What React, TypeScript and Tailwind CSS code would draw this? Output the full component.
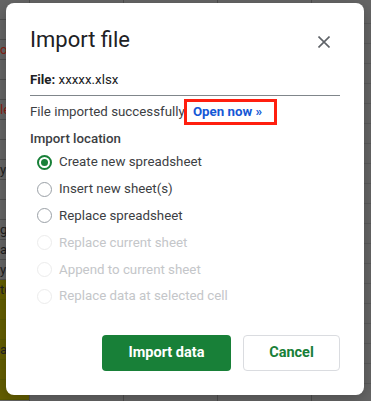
const options = [
  { label: "Create new spreadsheet", checked: true, disabled: false },
  { label: "Insert new sheet(s)", checked: false, disabled: false },
  { label: "Replace spreadsheet", checked: false, disabled: false },
  { label: "Replace current sheet", checked: false, disabled: true },
  { label: "Append to current sheet", checked: false, disabled: true },
  { label: "Replace data at selected cell", checked: false, disabled: true },
];

// fragments of the sheet that peek out on the left side of the dialog
const leftCells = ["", "", "ol", "", "", "le", "", "", "y", "", "", "go", "ar", "y", "t(", "", "", "ar", "", ""];

function Radio({ checked, disabled }: { checked: boolean; disabled: boolean }) {
  if (checked) {
    return (
      <span className="flex h-[15px] w-[15px] items-center justify-center rounded-full border-2 border-[#188038]">
        <span className="h-[7px] w-[7px] rounded-full bg-[#188038]" />
      </span>
    );
  }
  return (
    <span
      className={
        disabled
          ? "h-[15px] w-[15px] rounded-full border-[1.5px] border-[#ececec]"
          : "h-[15px] w-[15px] rounded-full border-[1.5px] border-[#9aa0a6]"
      }
    />
  );
}

function SheetBackground() {
  return (
    <div className="flex h-[401px] w-[371px] overflow-hidden bg-[#666666]">
      <div className="flex w-[30px] shrink-0 flex-col border-r border-[#4f4f4f]">
        {leftCells.map((t, i) => (
          <div
            key={i}
            className={
              i >= 14
                ? "h-[20px] shrink-0 overflow-hidden border-b border-[#5a5a00] bg-[#655f00] text-[13px] leading-[20px] text-[#222]"
                : "h-[20px] shrink-0 overflow-hidden border-b border-[#4f4f4f] text-[13px] leading-[20px] " +
                  (i < 8 ? "text-[#8a1f14]" : "text-[#1e1e1e]")
            }
          >
            {t}
          </div>
        ))}
      </div>
      {[0, 1, 2, 3].map((c) => (
        <div key={c} className="flex w-[94px] shrink-0 flex-col border-r border-[#4f4f4f] pt-[4px]">
          {Array.from({ length: 20 }).map((_, r) => (
            <div key={r} className="h-[20px] shrink-0 border-b border-[#5b5b5b]" />
          ))}
        </div>
      ))}
    </div>
  );
}

export default function App() {
  return (
    <div className="relative h-[401px] w-[371px] overflow-hidden font-['Roboto','Liberation_Sans',sans-serif]">
      <SheetBackground />

      <div className="absolute left-[6px] top-[3px] flex h-[392px] w-[358px] flex-col rounded-[8px] bg-white px-[24px] pt-[23px] shadow-[0_4px_16px_rgba(0,0,0,0.25)]">
        <div className="flex items-start justify-between">
          <h1 className="text-[22px] leading-[28px] text-[#202124]">Import file</h1>
          <button className="mr-[10px] mt-[10px] text-[#5f6368]">
            <svg width="12" height="12" viewBox="0 0 12 12" fill="none" stroke="currentColor" strokeWidth="1.6">
              <path d="M0.5 0.5 L11.5 11.5 M11.5 0.5 L0.5 11.5" />
            </svg>
          </button>
        </div>

        <div className="mt-[16px] border-b border-[#80868b] pb-[5px] text-[13.3px] leading-[20px] text-[#202124]">
          <span className="font-bold">File:</span> xxxxx.xlsx
        </div>

        <p className="mt-[6px] text-[13.3px] leading-[20px] text-[#3c4043]">
          File imported successfully.{" "}
          <span className="relative ml-[2px] font-bold text-[#1558d6]">
            Open now »
            <span className="absolute -bottom-[6px] -left-[9px] -right-[15px] -top-[5px] border-[3px] border-[#ff1f0f]" />
          </span>
        </p>

        <div className="mt-[7px] text-[13.3px] font-medium leading-[20px] text-[#3c4043]">Import location</div>

        <div className="flex flex-col">
          {options.map((o) => (
            <label key={o.label} className="flex h-[26.8px] items-center gap-[7px] pl-[7px]">
              <Radio checked={o.checked} disabled={o.disabled} />
              <span className={o.disabled ? "text-[13.3px] text-[#c4c6c9]" : "text-[13.3px] text-[#3c4043]"}>
                {o.label}
              </span>
            </label>
          ))}
        </div>

        <div className="mt-[25px] flex justify-end gap-[12px]">
          <button className="h-[36px] w-[129px] rounded-[4px] bg-[#188038] text-[14.5px] font-bold text-white">
            Import data
          </button>
          <button className="h-[36px] w-[97px] rounded-[4px] border border-[#dadce0] text-[14.5px] font-bold text-[#188038]">
            Cancel
          </button>
        </div>
      </div>
    </div>
  );
}
